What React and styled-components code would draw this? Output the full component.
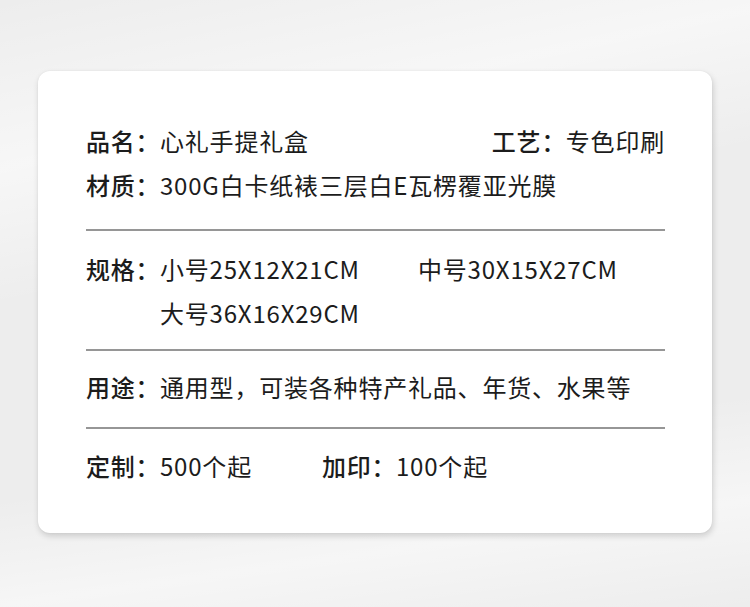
import React from "react";
import styled, { createGlobalStyle } from "styled-components";

const Global = createGlobalStyle`
  html, body { margin: 0; padding: 0; }
  body {
    font-family: "Noto Sans CJK SC", "Noto Sans", sans-serif;
    color: #1c1c1c;
  }
`;

const Page = styled.div`
  width: 750px;
  height: 607px;
  box-sizing: border-box;
  padding: 71px 38px 0 38px;
  background:
    linear-gradient(168deg, rgba(255,255,255,0) 0%, rgba(255,255,255,0.55) 22%, rgba(255,255,255,0) 40%),
    linear-gradient(172deg, rgba(255,255,255,0) 70%, rgba(255,255,255,0.5) 85%, rgba(255,255,255,0) 100%),
    #ededed;
  overflow: hidden;
`;

const Card = styled.div`
  width: 674px;
  height: 462px;
  box-sizing: border-box;
  background: #ffffff;
  border-radius: 12px;
  box-shadow: 1px 3px 6px rgba(0, 0, 0, 0.16), 0 0 2px rgba(0, 0, 0, 0.06);
  padding: 48px 47px 0 48px;
`;

const Section = styled.div`
  padding-top: ${(p) => p.$pt || 0}px;
  padding-bottom: ${(p) => p.$pb || 0}px;
  border-bottom: ${(p) => (p.$divider ? "2px solid #969696" : "none")};
`;

const Line = styled.div`
  display: flex;
  align-items: flex-start;
  justify-content: ${(p) => (p.$spread ? "space-between" : "flex-start")};
  min-height: 44px;
  line-height: 44px;
  font-size: 24px;
  letter-spacing: 0.8px;
  white-space: nowrap;
`;

const Item = styled.div`
  display: flex;
  width: ${(p) => (p.$w ? `${p.$w}px` : "auto")};
  flex: none;
`;

const Label = styled.span`
  font-weight: 500;
  width: 74px;
  flex: none;
`;

const Value = styled.span`
  font-weight: 400;
`;

const SizeGrid = styled.div`
  display: grid;
  grid-template-columns: 258px auto;
  grid-auto-rows: 44px;
`;

const Size = styled.span`
  font-weight: 400;
`;

export default function App() {
  return (
    <>
      <Global />
      <Page>
        <Card>
          <Section $pb={22} $divider>
            <Line $spread>
              <Item>
                <Label>品名：</Label>
                <Value>心礼手提礼盒</Value>
              </Item>
              <Item>
                <Label>工艺：</Label>
                <Value>专色印刷</Value>
              </Item>
            </Line>
            <Line>
              <Item>
                <Label>材质：</Label>
                <Value>300G白卡纸裱三层白E瓦楞覆亚光膜</Value>
              </Item>
            </Line>
          </Section>
          <Section $pt={16} $pb={14} $divider>
            <Line>
              <Label>规格：</Label>
              <SizeGrid>
                <Size>小号25X12X21CM</Size>
                <Size>中号30X15X27CM</Size>
                <Size>大号36X16X29CM</Size>
              </SizeGrid>
            </Line>
          </Section>
          <Section $pt={14} $pb={18} $divider>
            <Line>
              <Item>
                <Label>用途：</Label>
                <Value>通用型，可装各种特产礼品、年货、水果等</Value>
              </Item>
            </Line>
          </Section>
          <Section $pt={15}>
            <Line>
              <Item $w={236}>
                <Label>定制：</Label>
                <Value>500个起</Value>
              </Item>
              <Item>
                <Label>加印：</Label>
                <Value>100个起</Value>
              </Item>
            </Line>
          </Section>
        </Card>
      </Page>
    </>
  );
}
